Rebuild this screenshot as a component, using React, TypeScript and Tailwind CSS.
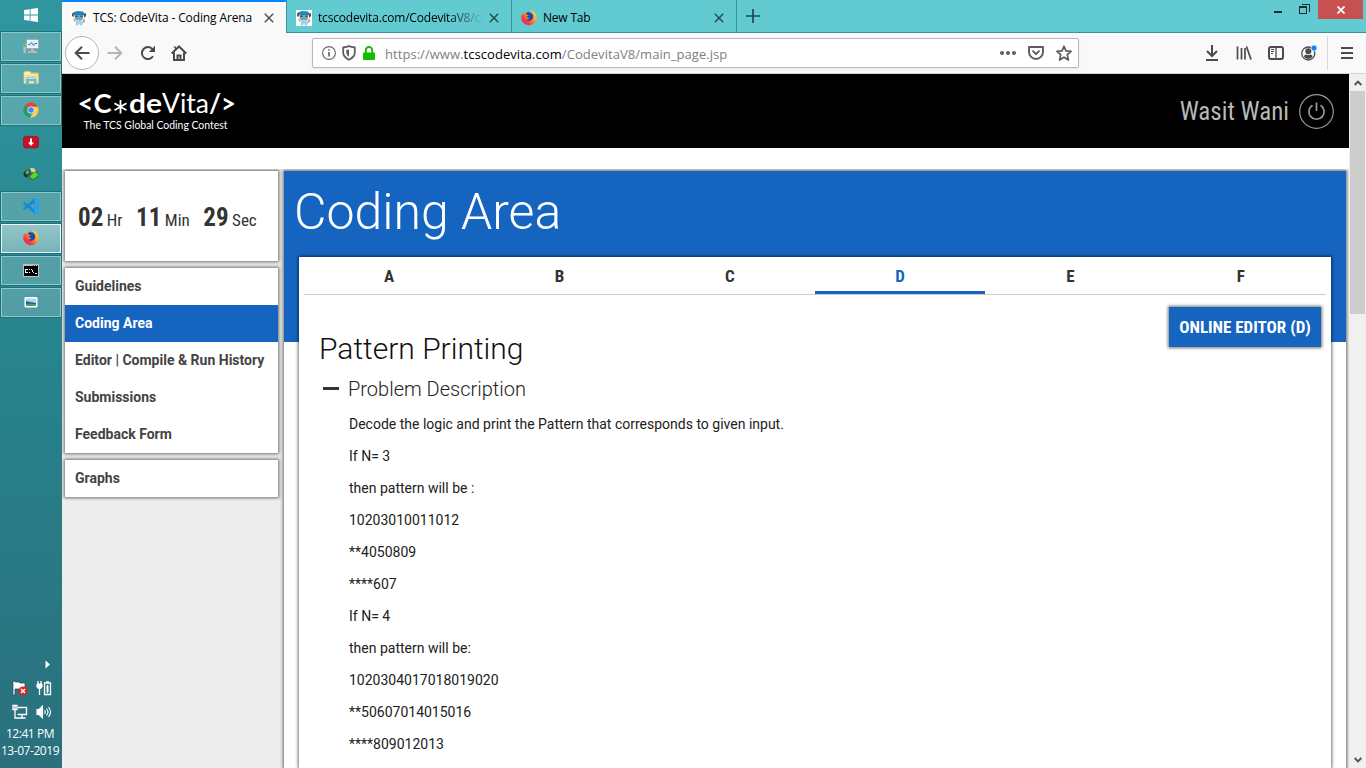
import React from "react";

const SANS = "font-['Open_Sans','Noto_Sans',sans-serif]";
const COND = "font-['Roboto_Condensed',Roboto,sans-serif] [font-stretch:75%]";
const CARD = "shadow-[0_0_3px_1px_rgba(0,0,0,0.55)]";

function Firefox() {
  return (
    <svg width="16" height="16" viewBox="0 0 16 16">
      <defs>
        <linearGradient id="fx" x1="1" y1="0" x2="0.1" y2="0.9">
          <stop offset="0" stopColor="#fff04a" />
          <stop offset="0.45" stopColor="#ff9a1f" />
          <stop offset="0.75" stopColor="#ff3d3d" />
          <stop offset="1" stopColor="#d9217a" />
        </linearGradient>
      </defs>
      <path d="M.6 5.5 1.8 3l.8 1.1C3.500 3 4.500 2.500 5.500 2.600L7 1.300C9 .2 11.300.5 12.500 2c2 1 3.200 3.400 3.200 6A7.700 7.700 0 1 1 .6 5.500Z" fill="url(#fx)" />
      <path d="M5 3.500C6.600 1.300 9.800 1.200 11 3.500c1.800 1.500 1.800 5-.3 6.600-2 1.500-5.300.8-5.900-1.100 1.200.7 2.700 0 3.300-.8-1.500 0-2.700-.6-2.700-1.700 1.300 0 2-.5 2.300-1.300C6.500 5 5.500 4.500 5 3.500Z" fill="#1d49b4" />
      <path d="M7.500 2.200C9.200 1.400 10.700 2.500 11 4c-1-1-2.300-1.200-3.500-1.800Z" fill="#2ea7f5" />
      <path d="M4.700 8.800c1.200 1.100 2.800.4 3.600-.5-1.300 0-2.900-.5-3-1.700" fill="#ff8a1c" />
    </svg>
  );
}

function Favicon() {
  return (
    <svg width="16" height="16" viewBox="0 0 16 16">
      <rect width="16" height="16" fill="#fff" />
      <path d="M2 2.500 6 1l6 .5 2 2.500-1.500 1.500h-9L1 4Z" fill="#1f86bd" />
      <path d="m1 4 1.500-1 .5 4L1 6Zm12 0 2-1v3l-2 2Z" fill="#674a3b" />
      <path d="M4 5h8v4l-2 1.500H6L3.500 9Z" fill="#73a5bb" />
      <path d="M4.500 5.500h2v1.500h-2Zm5 0h2v1.500h-2Z" fill="#33444f" />
      <path d="M5 10.500h6l1 3-1 2H9L8 13l-1 2.500H4.500L5 13Z" fill="#9fd0e4" />
      <path d="M11.500 9.500 14 9v3l-2 1ZM3 9l2 2-1 1-2-2Z" fill="#bba993" />
    </svg>
  );
}

function Monitor() {
  return (
    <svg width="16" height="16" viewBox="0 0 16 16">
      <rect x="3.500" y="1.500" width="12" height="9" rx="1" fill="#f2f4f5" stroke="#a9abac" />
      <rect x="5" y="3" width="9" height="6" fill="#d9f1fc" />
      <path d="M5 6.500h2L8.500 4.500l2 3L12 5.500h2" fill="none" stroke="#2e7cae" />
      <path d="M8 11h3v2h3v2H5v-2h3Z" fill="#b6b8b9" />
      <rect x=".5" y="6" width="2.500" height="9" fill="#b8b9b9" />
      <path d="M1 7h2v1.500H1Z" fill="#27cf24" />
    </svg>
  );
}

function Folder() {
  return (
    <svg width="16" height="16" viewBox="0 0 16 16">
      <path d="M.5 2.500 2 1h5l1 1.500h7.500v11H.5Z" fill="#e4c45f" />
      <path d="M2 2h5l1 2h7v1H1V3Z" fill="#faf0b7" />
      <path d="M1 5h14.500v8.500H1Z" fill="#f2df8e" />
      <path d="M3 14.500V9.500L5 7h6l2.500 2.500v5H11V11H6v3.500Z" fill="#62b9e8" />
      <path d="M4.500 9 6 7.500h5L12.500 9Z" fill="#bde8fa" />
    </svg>
  );
}

function Chrome() {
  return (
    <svg width="16" height="16" viewBox="0 0 16 16">
      <path d="M8 8 1.500 4A7.500 7.500 0 0 1 14.700 4.700Z" fill="#db4a3b" />
      <path d="M8 8 1.500 4A7.500 7.500 0 0 0 7.300 15.500Z" fill="#1fa05e" />
      <path d="M8 4.700h6.700A7.500 7.500 0 0 1 7.300 15.500L11 9.500Z" fill="#fdce4d" />
      <circle cx="8" cy="8" r="3.600" fill="#f3f3f3" />
      <circle cx="8" cy="8" r="2.800" fill="#4587f0" />
    </svg>
  );
}

function Downloader() {
  return (
    <svg width="16" height="16" viewBox="0 0 16 16">
      <rect x=".3" y="2.300" width="15.400" height="11.700" rx="3" fill="#c91125" stroke="#8e0c1b" strokeWidth=".6" />
      <path d="M7 4.500h2v4h2l-3 3.500-3-3.500h2Z" fill="#fff" />
    </svg>
  );
}

function Globe() {
  return (
    <svg width="16" height="16" viewBox="0 0 16 16">
      <ellipse cx="8.500" cy="7.500" rx="6.500" ry="5.500" fill="#386a9d" />
      <path d="M.5 7.500c0-2 2.500-4 6-3.500l1 3-4 4.500C1.500 11 .5 9.500.5 7.500Z" fill="#20342b" />
      <path d="m2 6 3-2 2 2-3 3Z" fill="#5cb331" />
      <path d="M7 2.500c3-1 5 0 6 2.500l-4 2Z" fill="#e7d780" />
      <path d="M9 6h6.500v5L9.500 15 4 11.500h4Z" fill="#268e24" />
      <path d="m7 11 4.500-5.500 4 3.500-5.500 4Z" fill="#65cc3a" />
    </svg>
  );
}

function VSCode() {
  return (
    <svg width="16" height="16" viewBox="0 0 16 16">
      <path d="m11.500 0 4.200 1.800v12.400L11.500 16 4.700 9.700 1.700 12 .2 11.200V10L2.500 8 .2 6V4.800L1.700 4l3 2.300ZM11.500 4.500 7 8l4.500 3.500Z" fill="#168bd4" fillRule="evenodd" />
      <path d="m11.500 0 4.200 1.800v12.400L11.500 16Z" fill="#2ba4ef" />
    </svg>
  );
}

function Console() {
  return (
    <svg width="16" height="13" viewBox="0 0 16 13" shapeRendering="crispEdges">
      <rect width="16" height="13" fill="#bfc0c0" />
      <rect x="1" y="2" width="14" height="10" fill="#000" />
      <path d="M10 1h1m1 0h1m1 0h1" stroke="#555" />
      <path d="M5 5.500H2.500v3H5M6.500 5v1m0 2v1M8.500 5v1m1 0v2m1 0v1M12 9.500h2" stroke="#fff" fill="none" />
    </svg>
  );
}

function Picture() {
  return (
    <svg width="16" height="16" viewBox="0 0 16 16">
      <path d="M.5 4V2h3m9 0h3v2m0 8v2h-3m-9 0h-3v-2" stroke="#3292d8" fill="none" />
      <rect x="1.500" y="3" width="13" height="10.500" rx="1" fill="#fff" />
      <rect x="3" y="4.500" width="10" height="7.500" fill="#a9d9ee" />
      <path d="m3 7 4 1 6 1v2.500H3Z" fill="#215f7a" />
      <path d="M3 10c3-1 6-.5 10 0v2H3Z" fill="#4a9a73" />
    </svg>
  );
}

const TASKS: { icon: React.ReactNode; kind: "plain" | "open" | "active" }[] = [
  { icon: <Monitor />, kind: "open" },
  { icon: <Folder />, kind: "open" },
  { icon: <Chrome />, kind: "open" },
  { icon: <Downloader />, kind: "plain" },
  { icon: <Globe />, kind: "plain" },
  { icon: <VSCode />, kind: "open" },
  { icon: <Firefox />, kind: "active" },
  { icon: <Console />, kind: "open" },
  { icon: <Picture />, kind: "open" },
];

const TASK_STYLE = {
  plain: "border-transparent",
  open: "border-[#93c5c9] bg-white/20 outline outline-[#1d737c]",
  active: "border-[#eef8f8] bg-gradient-to-b from-[#92c6ca] to-[#78b3b8] outline outline-[#1d737c]",
};

function Taskbar() {
  return (
    <aside className="flex w-[62px] shrink-0 flex-col bg-gradient-to-b from-[#2f969f] via-[#27828b] to-[#2a707d]">
      <div className="flex h-[30px] items-center justify-center">
        <svg width="14" height="14" viewBox="0 0 14 14" fill="#fff">
          <path d="M0 2 5.700 1.200V6.600H0ZM6.500 1.100 14 0V6.600H6.500ZM0 7.400H5.700V12.800L0 12ZM6.500 7.400H14V14L6.500 12.900Z" />
        </svg>
      </div>
      <div className="flex flex-col gap-[3px] pt-[2px] pl-px">
        {TASKS.map((t, i) => (
          <div key={i} className={`flex h-[29px] w-[60px] items-center justify-center border pb-px ${TASK_STYLE[t.kind]}`}>
            {t.icon}
          </div>
        ))}
      </div>
      <div className="mt-auto flex h-[112px] flex-col">
        <div className="flex h-[16px] items-center justify-end pr-[11px]">
          <svg width="6" height="9" viewBox="0 0 6 9"><path d="M.5.500 5 4.500.5 8.500Z" fill="#fff" /></svg>
        </div>
        <div className="mt-[3px] flex h-[24px] items-center justify-center gap-[8px] pl-[2px] pt-0.5">
          <svg width="16" height="16" viewBox="0 0 16 16">
            <path d="M1 1h2v1h4l1 1h5v7H8L7 9H3v6H1Z" fill="#fff" stroke="#174b55" strokeWidth=".7" />
            <circle cx="11" cy="11" r="4.600" fill="#df2424" />
            <path d="m9 9 4 4m0-4-4 4" stroke="#fff" strokeWidth="1.500" />
          </svg>
          <svg width="16" height="16" viewBox="0 0 16 16" fill="none" stroke="#fff">
            <path d="M2 1v3m3-3v3M3.500 8v7" strokeWidth="1.300" />
            <path d="M1 4h5v3L5 8.500H2L1 7Z" fill="#fff" />
            <path d="M8.500 3h6v11.500h-6ZM10 1.800h3" strokeWidth="1.300" />
            <path d="M11 5.500h1v7h-1Z" fill="#fff" />
          </svg>
        </div>
        <div className="flex h-[25px] items-center justify-center gap-[8px] pl-[2px]">
          <svg width="16" height="16" viewBox="0 0 16 16" fill="none" stroke="#fff" strokeWidth="1.300">
            <path d="M6 3.500h8.500v7H5.500M10 11v3M6.500 14h7M3 7v7h4M1 1.500h4v4H1Z" />
            <path d="M3 2v5" />
          </svg>
          <svg width="16" height="16" viewBox="0 0 16 16" fill="none" stroke="#fff" strokeWidth="1.100">
            <path d="M1 5.500h2L6.500 2v12L3 10.500H1Z" fill="#fff" />
            <path d="M8.500 6q1.500 2 0 4M10.500 4.500q3 3.500 0 7M12.500 3q4 5 0 10" />
          </svg>
        </div>
        <div className={`mt-px flex flex-col items-center pr-[2px] text-[12px] leading-[17px] text-white whitespace-nowrap ${SANS}`}>
          <span className="tracking-[-0.45px]">12:41 PM</span>
          <span className="tracking-[-0.45px]">13-07-2019</span>
        </div>
      </div>
    </aside>
  );
}

function Close() {
  return (
    <svg width="10" height="10" viewBox="0 0 10 10" className="shrink-0"><path d="m.8.800 8.400 8.400m0-8.400L.8 9.200" stroke="#222b2c" strokeOpacity=".8" strokeWidth="1.500" /></svg>
  );
}

function TabStrip() {
  return (
    <div className="flex h-[33px] bg-[#61cbd1]">
      <div className="flex w-[224px] items-center border-t-2 border-[#0a84ff] bg-[#f9f9fa] pl-[9px] pr-[12px]">
        <Favicon />
        <span className="ml-[6px] flex-1 whitespace-nowrap tracking-[-0.12px]">TCS: CodeVita - Coding Arena</span>
        <Close />
      </div>
      <div className="flex w-[225px] items-center border-b border-l border-[#3f9097] pt-[3px] pl-[9px] pr-[12px]">
        <Favicon />
        <span className="ml-[6px] whitespace-nowrap tracking-[-0.19px] [mask-image:linear-gradient(to_right,#000_130px,transparent_165px)]">tcscodevita.com/CodevitaV8/co</span>
        <span className="ml-auto flex"><Close /></span>
      </div>
      <div className="flex w-[225px] items-center border-b border-l border-[#3f9097] pt-[3px] pl-[9px] pr-[12px]">
        <Firefox />
        <span className="ml-[6px] flex-1 tracking-[-0.2px]">New Tab</span>
        <Close />
      </div>
      <div className="flex flex-1 justify-between border-b border-l border-[#3f9097] pl-[9px]">
        <svg width="14" height="14" viewBox="0 0 14 14" className="mt-[9px]"><path d="M7 0v14M0 7h14" stroke="#24474a" strokeWidth="1.700" /></svg>
        <div className="flex pr-[3px]">
          <svg width="8" height="3" viewBox="0 0 8 3" className="mt-[11px]"><path d="M0 0h8v2H0Z" fill="#1d2c2d" /></svg>
          <svg width="11" height="11" viewBox="0 0 11 11" className="ml-[17px] mt-[4px]" fill="none" stroke="#1d2c2d" shapeRendering="crispEdges">
            <path d="M2.500.500h8v7M.5 3h7v6.500h-7Z" />
            <path d="M0 3h8" strokeWidth="2" />
          </svg>
          <div className="ml-[8px] flex h-[19px] w-[45px] items-center justify-center bg-[#c75050]">
            <svg width="8" height="8" viewBox="0 0 8 8"><path d="m.5.500 7 7m0-7-7 7" stroke="#fff" strokeWidth="1.700" /></svg>
          </div>
        </div>
      </div>
    </div>
  );
}

function Toolbar() {
  return (
    <div className="flex h-[41px] items-center border-b border-[#d4d4d6] bg-[#f9f9fa]">
      <div className="ml-[3px] flex h-[34px] w-[34px] items-center justify-center rounded-full border border-[#b4b4b5] bg-white">
        <svg width="16" height="16" viewBox="0 0 16 16" fill="none" stroke="#4a4a4f" strokeWidth="2"><path d="M15.500 8H1.500M8 1.700 1.700 8 8 14.300" /></svg>
      </div>
      <svg className="ml-[8px]" width="16" height="16" viewBox="0 0 16 16" fill="none" stroke="#b5b5b7" strokeWidth="2"><path d="M.5 8h14M8 1.700 14.300 8 8 14.300" /></svg>
      <svg className="ml-[17px]" width="16" height="16" viewBox="0 0 16 16" fill="none" stroke="#4a4a4f" strokeWidth="2"><path d="M13 11.300A6 6 0 1 1 12.500 4.200" /><path d="M15 .8V7H8.800Z" fill="#4a4a4f" stroke="none" /></svg>
      <svg className="ml-[15px]" width="16" height="16" viewBox="0 0 16 16" fill="none" stroke="#4a4a4f" strokeWidth="2"><path d="M.7 8.500 8 1.500l7.300 7M3 7.500V15h10V7.500M6.500 15v-4.500h3V15" /><path d="M2.500 2h2v3" strokeWidth="1.200" /></svg>
      <div className="ml-[125px] flex h-[30px] w-[767px] items-center rounded-[2px] border border-[#b8b8b9] bg-white shadow-[0_1px_3px_rgba(0,0,0,0.07)]">
        <svg className="ml-[9px]" width="14" height="14" viewBox="0 0 14 14" fill="none" stroke="#656569"><circle cx="7" cy="7" r="6.400" strokeWidth="1.100" /><path d="M7 6v4.500M7 3.200v1.600" strokeWidth="1.700" /></svg>
        <svg className="ml-[6px]" width="14" height="16" viewBox="0 0 14 16" fill="none" stroke="#5c5c61" strokeWidth="1.800"><path d="M1.200 2.500Q4.500 2.200 7 1.200q2.500 1 5.800 1.300v5q0 4.500-5.800 7.300-5.800-2.800-5.800-7.300Z" /><path d="M7 4.500v7.300Q4.300 10 4.300 7.500V4.900Z" fill="#5c5c61" stroke="none" /></svg>
        <svg className="ml-[7px]" width="12" height="15" viewBox="0 0 12 15"><path d="M2.800 7V4.200a3.200 3.200 0 0 1 6.400 0V7" fill="none" stroke="#12bc00" strokeWidth="1.900" /><rect y="6.500" width="12" height="7.500" rx="1" fill="#12bc00" /></svg>
        <span className={`ml-[10px] whitespace-nowrap pt-[3px] text-[13px] tracking-[0.05px] text-[#808084] ${SANS}`}>https://www.<span className="text-black">tcscodevita.com</span>/CodevitaV8/main_page.jsp</span>
        <div className="ml-auto flex items-center pr-[6px]">
          <svg width="16" height="4" viewBox="0 0 16 4" fill="#5c5c61"><circle cx="2" cy="2" r="2" /><circle cx="8" cy="2" r="2" /><circle cx="14" cy="2" r="2" /></svg>
          <svg className="ml-[12px]" width="16" height="14" viewBox="0 0 16 14" fill="none" stroke="#5c5c61" strokeWidth="1.900" strokeLinecap="round"><path d="M1 1h14v5a7 7 0 0 1-14 0Z" strokeLinejoin="round" /><path d="m5 5.200 3 3 3-3" /></svg>
          <svg className="ml-[12px]" width="16" height="16" viewBox="0 0 16 16" fill="none" stroke="#5c5c61" strokeWidth="1.800" strokeLinejoin="round"><path d="m8 1.300 2 4.500 5 .5-3.700 3.400L12.300 15 8 12.200 3.700 15l1-5.300L1 6.300l5-.5Z" /></svg>
        </div>
      </div>
      <svg className="ml-[126px]" width="14" height="16" viewBox="0 0 14 16" fill="none" stroke="#4a4a4f" strokeWidth="2"><path d="M7 0v11M2 6l5 5 5-5M1 15h12" /></svg>
      <svg className="ml-[17px]" width="16" height="16" viewBox="0 0 16 16" fill="none" stroke="#4a4a4f" strokeWidth="2"><path d="M1.500 1.500v13M5.500 3v11.500M9 3v11.500M10.500 1.500l4.500 13" strokeWidth="1.700" /></svg>
      <svg className="ml-[16px]" width="16" height="14" viewBox="0 0 16 14" fill="none" stroke="#4a4a4f"><rect x="1" y="1" width="14" height="12" rx="2" strokeWidth="2" /><path d="M8 1v12" strokeWidth="1.300" /><path d="M3 3.500h3M3 5.500h3M3 7.500h2" /></svg>
      <svg className="ml-[17px]" width="16" height="16" viewBox="0 0 16 16"><circle cx="7.300" cy="8.500" r="6.500" fill="none" stroke="#4a4a4f" strokeWidth="1.300" /><circle cx="7.300" cy="6.300" r="3" fill="#4a4a4f" /><path d="M3 12q0-2.500 2-2.500 2.300 1.200 4.600 0 2 0 2 2.500Q7.300 16 3 12Z" fill="#4a4a4f" /><circle cx="13" cy="3" r="3" fill="#0a84ff" stroke="#f9f9fa" strokeWidth=".7" /></svg>
      <span className="ml-[10px] h-[34px] w-px bg-[#d7d7db]" />
      <svg className="ml-[13px]" width="12" height="12" viewBox="0 0 12 12" stroke="#4a4a4f" strokeWidth="2"><path d="M0 1h12M0 6h12M0 11h12" /></svg>
    </div>
  );
}

function SiteHeader() {
  return (
    <header className="flex h-[74px] items-center justify-between bg-black pr-[15px]">
      <svg width="180" height="74" viewBox="0 0 180 74" fill="#fff">
        <g className="font-[Lato,sans-serif] text-[26px]">
          <text x="15.500" y="39" fontWeight="700" textLength="34" lengthAdjust="spacingAndGlyphs">&lt;C</text>
          <text x="67" y="39" fontWeight="700" textLength="33" lengthAdjust="spacingAndGlyphs">de</text>
          <text x="100" y="39" textLength="47" lengthAdjust="spacingAndGlyphs">Vita</text>
          <text x="147" y="39" fontWeight="700" textLength="27" lengthAdjust="spacingAndGlyphs">/&gt;</text>
        </g>
        <path d="M58.500 26v13.500M52.500 29.300l12 7m0-7-12 7" stroke="#fff" strokeWidth="1.800" />
        <text x="21.500" y="55" textLength="144" lengthAdjust="spacingAndGlyphs" className="font-[Lato,sans-serif] text-[11.500px]">The TCS Global Coding Contest</text>
      </svg>
      <div className="flex items-center gap-[10px]">
        <span className={`text-[25px] leading-none text-[#b9b9b9] ${COND}`}>Wasit Wani</span>
        <svg width="35" height="35" viewBox="0 0 35 35" fill="none" stroke="#999">
          <circle cx="17.500" cy="17.500" r="16.800" strokeWidth="1.200" />
          <path d="M13.500 11.200a7.600 7.600 0 1 0 8 0M17.500 8.500v8.500" strokeWidth="1.700" />
        </svg>
      </div>
    </header>
  );
}

const TIMES = [["02", "Hr"], ["11", "Min"], ["29", "Sec"]];
const MENU = ["Guidelines", "Coding Area", "Editor | Compile & Run History", "Submissions", "Feedback Form"];

function Sidebar() {
  return (
    <nav className="flex w-[222px] shrink-0 flex-col bg-[#ededed] pl-[3px] pt-[2px]">
      <div className={`flex h-[90px] w-[213px] items-center bg-white pl-[13px] pt-[2px] text-[#333] ${CARD} ${COND}`}>
        {TIMES.map(([n, u]) => (
          <div key={u} className="mr-[13.500px] flex items-baseline gap-[3.500px]">
            <span className="text-[25px] font-bold leading-none">{n}</span>
            <span className="text-[17px] leading-none">{u}</span>
          </div>
        ))}
      </div>
      <ul className={`mt-[7px] w-[213px] bg-white ${CARD}`}>
        {MENU.map((m) => (
          <li key={m} className={`flex h-[37px] items-center whitespace-nowrap pl-[10px] text-[14px] font-bold ${m === "Coding Area" ? "bg-[#1565c0] text-white" : "text-[#444]"}`}>{m}</li>
        ))}
      </ul>
      <div className={`mt-[7px] flex h-[37px] w-[213px] items-center bg-white pl-[10px] text-[14px] font-bold text-[#444] ${CARD}`}>Graphs</div>
    </nav>
  );
}

const LINES = [
  "Decode the logic and print the Pattern that corresponds to given input.",
  "If N= 3",
  "then pattern will be :",
  "10203010011012",
  "**4050809",
  "****607",
  "If N= 4",
  "then pattern will be:",
  "1020304017018019020",
  "**50607014015016",
  "****809012013",
];

function Problem() {
  return (
    <div className="flex flex-1 bg-[#ededed] pt-[2px] pr-[3px]">
      <section className={`flex flex-1 flex-col bg-white bg-[linear-gradient(#1565c0_171px,transparent_171px)] px-[15px] ${CARD}`}>
        <h1 className="ml-[-5px] h-[86px] pt-[14px] text-[50px] font-light leading-[54px] text-white">Coding Area</h1>
        <div className={`flex-1 bg-white px-[5px] ${CARD}`}>
          <div className="flex h-[38px] border-b border-[#ccc]">
            {["A", "B", "C", "D", "E", "F"].map((t) => (
              <div key={t} className={`flex h-[37px] flex-1 items-center justify-center pt-[2px] text-[17px] font-bold ${COND} ${t === "D" ? "border-b-3 border-[#1565c0] pt-[5px] text-[#1565c0]" : "text-[#333]"}`}>{t}</div>
            ))}
          </div>
          <div className="flex items-start justify-between pr-[5px] pt-[12px]">
            <h2 className="ml-[15px] mt-[23px] text-[30px] font-light leading-[37px] text-[#111]">Pattern Printing</h2>
            <button className={`h-[40px] w-[152px] whitespace-nowrap bg-[#1565c0] pt-[2px] text-[17px] font-bold text-white ${CARD} ${COND}`}>ONLINE EDITOR (D)</button>
          </div>
          <div className="flex h-[41px] items-center pl-[19px] pt-[2px]">
            <span className="h-[3px] w-[16px] bg-[#333]" />
            <h3 className="ml-[9px] text-[20px] font-light text-[#222]">Problem Description</h3>
          </div>
          <div className="pl-[45px] text-[14px] leading-[32px] text-[#212121]">
            {LINES.map((l) => <p key={l}>{l}</p>)}
          </div>
        </div>
      </section>
    </div>
  );
}

function Scrollbar() {
  return (
    <div className="flex w-[17px] shrink-0 flex-col items-center bg-[#f0f0f0]">
      <div className="flex h-[17px] items-center">
        <svg width="8" height="6" viewBox="0 0 8 6" fill="none" stroke="#505050" strokeWidth="1.900"><path d="m.7 5 3.300-3.300L7.300 5" /></svg>
      </div>
      <div className="h-[223px] w-[15px] bg-[#cdcdcd]" />
      <div className="mt-auto flex h-[17px] items-center">
        <svg width="8" height="6" viewBox="0 0 8 6" fill="none" stroke="#505050" strokeWidth="1.900"><path d="M.7 1 4 4.300 7.300 1" /></svg>
      </div>
    </div>
  );
}

export default function App() {
  return (
    <div className="flex h-screen w-screen overflow-hidden">
      <Taskbar />
      <div className="flex min-w-0 flex-1 flex-col">
        <div className={`text-[12px] text-black ${SANS}`}>
          <TabStrip />
          <Toolbar />
        </div>
        <div className="flex min-h-0 flex-1">
          <main className="flex min-w-0 flex-1 flex-col bg-white font-[Roboto,sans-serif]">
            <SiteHeader />
            <div className="mt-[21px] flex min-h-0 flex-1 overflow-hidden">
              <Sidebar />
              <Problem />
            </div>
          </main>
          <Scrollbar />
        </div>
      </div>
    </div>
  );
}
